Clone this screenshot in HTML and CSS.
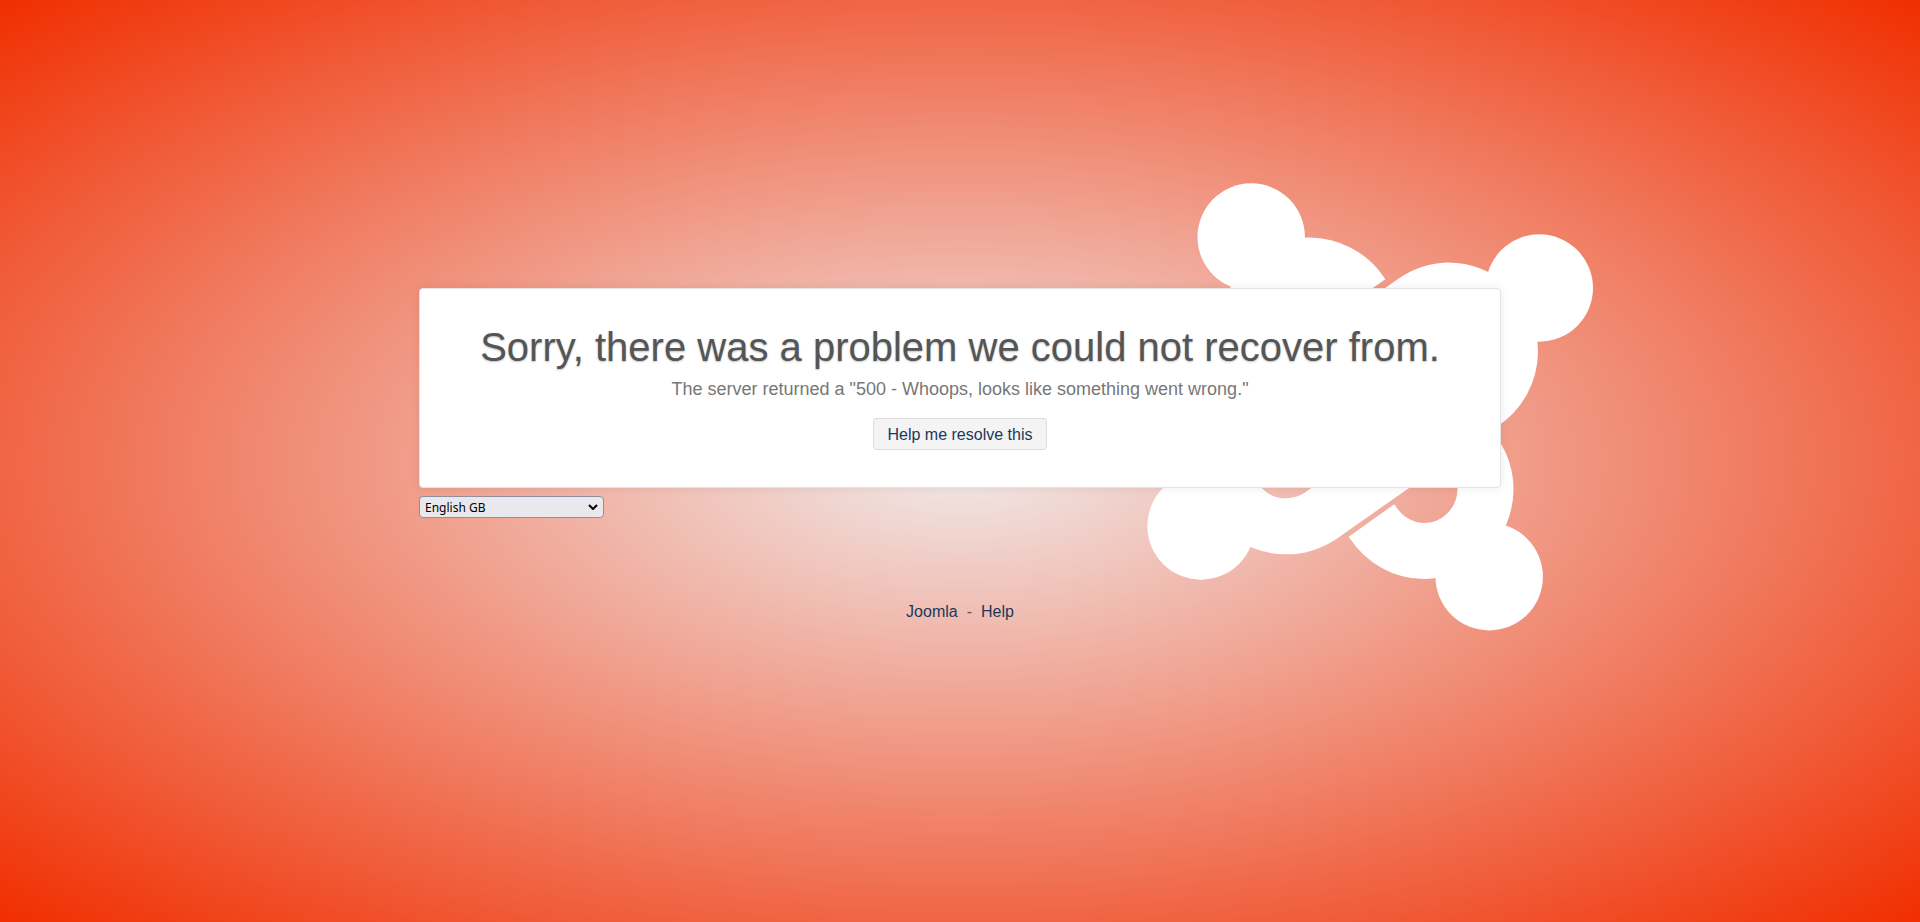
FILE: index.html
```html
<!DOCTYPE html>
<html lang="en-GB">
<head>
<meta charset="utf-8">
<title>Error 500</title>
<link rel="stylesheet" href="styles.css">
</head>
<body>
<main class="container">
  <svg class="logo" viewBox="1147 183 446 448" aria-hidden="true">
    <g class="arms">
      <path d="M1362.400 295.300L1361 293.300A62 62 0 0 0 1309 265.500A62 62 0 0 0 1249 327.500A62 62 0 0 0 1258 362.500L1315 444"/>
      <path d="M1331 360L1414 302A62 62 0 0 1 1448 290.400A62 62 0 0 1 1510 352A62 62 0 0 1 1482 403"/>
      <path d="M1371.500 520.500L1373 522.600A62 62 0 0 0 1424 551A62 62 0 0 0 1485.500 490A62 62 0 0 0 1475 455L1418 373"/>
      <path d="M1403 458L1321 515.500A62 62 0 0 1 1286 526.300A62 62 0 0 1 1224 464.500A62 62 0 0 1 1253 412"/>
    </g>
    <g class="knobs">
      <circle cx="1251.200" cy="237" r="53.700"/>
      <circle cx="1539.300" cy="288" r="53.700"/>
      <circle cx="1201" cy="526" r="53.700"/>
      <circle cx="1489.200" cy="576.700" r="53.700"/>
    </g>
  </svg>
  <section class="card">
    <h1 class="title">Sorry, there was a problem we could not recover from.</h1>
    <p class="message">The server returned a "500 - Whoops, looks like something went wrong."</p>
    <button class="button" type="button">Help me resolve this</button>
  </section>
  <div class="picker">
    <select class="language" aria-label="Language">
      <option>English GB</option>
    </select>
    <svg class="chevron" viewBox="0 0 10 6" aria-hidden="true"><path d="M1 1l4 4 4-4"/></svg>
  </div>
  <footer class="footer"><a href="#joomla">Joomla</a><span>-</span><a href="#help">Help</a></footer>
</main>
</body>
</html>
```
FILE: styles.css
```css
* {
  box-sizing: border-box;
}

body {
  margin: 0;
  min-height: 100vh;
  padding: 288px 24px 24px;
  background: radial-gradient(ellipse at center, #f0eaea 0%, #f02e00 100%) no-repeat;
  color: #555;
  font: 16px/20px "Liberation Sans", Arial, sans-serif;
}

.container {
  position: relative;
  max-width: 1082px;
  margin: 0 auto;
}

.logo {
  position: absolute;
  top: -105px;
  right: -92px;
  z-index: -1;
  width: 446px;
}

.arms {
  fill: none;
  stroke: #fff;
  stroke-width: 56px;
}

.knobs {
  fill: #fff;
}

.card {
  padding: 33px 40px 37px;
  border: 1px solid #e3e3e3;
  border-radius: 4px;
  background: #fff;
  box-shadow: 0 0 10px rgba(0, 0, 0, 0.08);
  text-align: center;
}

.title {
  margin: 0;
  font-size: 40px;
  font-weight: 400;
  line-height: 50px;
  text-shadow: 0 1px 2px rgba(0, 0, 0, 0.25);
}

.message {
  margin: 5px 0 17px;
  color: #777;
  font-size: 18px;
  line-height: 24px;
}

.button {
  display: block;
  height: 32px;
  margin: 0 auto;
  padding: 2px 14px 0;
  border: 1px solid #ddd;
  border-radius: 3px;
  background: #f4f4f4;
  color: #1a3859;
  font: inherit;
}

.picker {
  position: relative;
  width: 185px;
  margin-top: 8px;
}

.language {
  display: block;
  width: 100%;
  height: 22px;
  padding: 0 24px 0 5px;
  border: 1px solid #8f8f9d;
  border-radius: 4px;
  background-color: #e9e9ed;
  color: #000;
  font: 12px "Noto Sans", sans-serif;
  appearance: none;
}

.chevron {
  position: absolute;
  top: 8px;
  right: 6px;
  width: 10px;
  fill: none;
  stroke: #000;
  stroke-width: 2px;
  pointer-events: none;
}

.footer {
  display: flex;
  justify-content: center;
  gap: 9px;
  margin-top: 84px;
}

.footer a {
  color: #1a3859;
  text-decoration: none;
}
```
